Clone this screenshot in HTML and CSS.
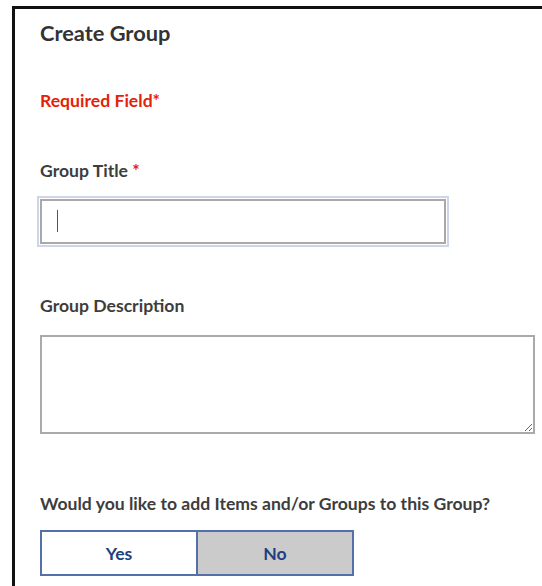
FILE: index.html
```html
<!DOCTYPE html>
<html lang="en">
<head>
<meta charset="utf-8">
<title>Create Group</title>
<link rel="stylesheet" href="styles.css">
</head>
<body>
<div class="panel">
  <h2 class="panel-title">Create Group</h2>
  <p class="required-note">Required Field*</p>

  <form class="group-form">
    <label class="field-label label-title" for="group-title">Group Title <span class="star">*</span></label>
    <div class="input-wrap">
      <input id="group-title" class="text-input" type="text">
      <span class="caret"></span>
    </div>

    <label class="field-label label-desc" for="group-desc">Group Description</label>
    <textarea id="group-desc" class="text-area"></textarea>

    <p class="field-label label-question">Would you like to add Items and/or Groups to this Group?</p>
    <div class="toggle">
      <button type="button" class="toggle-btn">Yes</button>
      <button type="button" class="toggle-btn is-active">No</button>
    </div>
  </form>
</div>
</body>
</html>
```

FILE: styles.css
```css
html, body {
  margin: 0;
  padding: 0;
  background: #fff;
  overflow: hidden;
}

body {
  font-family: "Lato", "Open Sans", sans-serif;
  color: #3a3a3a;
}

.panel {
  box-sizing: border-box;
  height: 580px;
  margin: 6px 0 0 12px;
  border-left: 3px solid #111;
  border-top: 3px solid #111;
  padding: 12px 0 0 25px;
}

.panel-title {
  margin: 0;
  font-size: 21.8px;
  line-height: 24px;
  font-weight: 700;
  color: #333;
}

.required-note {
  margin: 46px 0 0;
  font-size: 17.6px;
  line-height: 20px;
  font-weight: 700;
  color: #e52207;
}

.group-form {
  display: flex;
  flex-direction: column;
  align-items: flex-start;
}

.field-label {
  display: block;
  margin: 0;
  font-size: 17.6px;
  line-height: 20px;
  font-weight: 700;
  color: #3d3d3d;
}

.label-title { margin-top: 50px; }
.label-desc { margin-top: 52px; }
.label-question { margin-top: 60px; }

.star {
  color: #e52207;
}

.input-wrap {
  position: relative;
  margin-top: 18px;
}

.text-input {
  display: block;
  box-sizing: border-box;
  width: 406px;
  height: 45px;
  margin: 0;
  padding: 0 16px;
  border: 2px solid #a9a9a9;
  background: #fff;
  outline: 2px solid #cdd6e8;
  outline-offset: 1px;
  font: inherit;
}

.caret {
  position: absolute;
  left: 17px;
  top: 11px;
  width: 1px;
  height: 22px;
  background: #555;
}

.text-area {
  display: block;
  box-sizing: border-box;
  width: 495px;
  height: 99px;
  margin: 19px 0 0;
  border: 2px solid #aaa;
  background: #fff;
  font: inherit;
}

.toggle {
  display: flex;
  margin-top: 16px;
}

.toggle-btn {
  box-sizing: border-box;
  width: 157px;
  height: 46px;
  margin: 0;
  border: 2px solid #5470a8;
  background: #fff;
  color: #1f3f80;
  font-family: inherit;
  font-size: 17.6px;
  font-weight: 700;
  cursor: pointer;
}

.toggle-btn:first-child {
  border-right-width: 1px;
}

.toggle-btn + .toggle-btn {
  border-left-width: 1px;
}

.toggle-btn.is-active {
  background: #cbcbcb;
}
```
